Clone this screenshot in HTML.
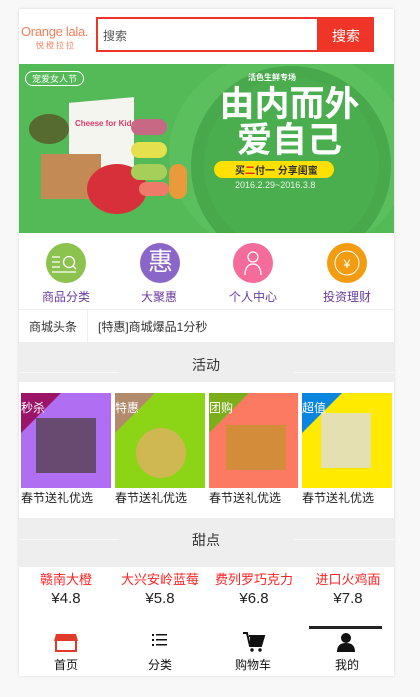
<!DOCTYPE html>
<html><head><meta charset="utf-8"><style>
*{margin:0;padding:0;box-sizing:border-box}
body{width:420px;height:697px;background:#f8f8f8;font-family:"Liberation Sans","Noto Sans CJK SC",sans-serif;position:relative;overflow:hidden}
.c{position:absolute;left:19px;top:9px;width:375px;height:667px;background:#fff;box-shadow:0 0 3px rgba(0,0,0,.12);overflow:hidden}
.a{position:absolute}
.t{position:absolute;white-space:nowrap}
</style></head><body>
<div class="c">
 <div class="t" style="left:2px;top:15px;font-size:13px;color:#f27f5a;letter-spacing:-0.3px">Orange lala.</div>
 <div class="t" style="left:17px;top:31px;font-size:8px;color:#f27f5a;letter-spacing:2px">悦橙拉拉</div>
 <div class="a" style="left:77px;top:8px;width:278px;height:35px;border:2px solid #ef3528;background:#fff"></div>
 <div class="t" style="left:84px;top:18px;font-size:12px;color:#555">搜索</div>
 <div class="a" style="left:298px;top:8px;width:57px;height:35px;background:#ef3528"></div>
 <div class="t" style="left:313px;top:17px;font-size:14px;color:#fff">搜索</div>
 <!-- banner -->
 <div class="a" style="left:0;top:55px;width:375px;height:169px;background:#54b957;overflow:hidden">
  <div class="a" style="left:150px;top:-15px;width:240px;height:210px;border-radius:50%;background:#5bbf5e"></div>
  <div class="a" style="left:172px;top:2px;width:200px;height:200px;border-radius:50%;background:#48a84c"></div>
  <div class="a" style="left:185px;top:14px;width:175px;height:175px;border-radius:50%;background:#4aae4f"></div>
  <div class="t" style="left:229px;top:8px;font-size:8px;color:#fff;font-weight:bold">活色生鲜专场</div>
  <div class="t" style="left:193px;top:23px;font-size:35px;line-height:36px;color:#fff;font-weight:bold;text-align:center;width:155px">由内而外<br>爱自己</div>
  <div class="a" style="left:195px;top:97px;width:120px;height:17px;border-radius:9px;background:#ffe000"></div>
  <div class="t" style="left:216px;top:98px;font-size:10px;font-weight:bold;color:#333">买<span style="color:#e22">二</span>付一 分享闺蜜</div>
  <div class="t" style="left:216px;top:116px;font-size:9px;color:#e8f5e8">2016.2.29~2016.3.8</div>
  <div class="t" style="left:6px;top:7px;font-size:9px;color:#fff;border:1px solid #fff;border-radius:8px;padding:0 6px">宠爱女人节</div>
  <div class="a" style="left:50px;top:36px;width:65px;height:70px;background:#f5f5f0;transform:skewY(-5deg)"></div>
  <div class="t" style="left:56px;top:55px;font-size:8px;color:#e2386a;font-weight:bold">Cheese for Kids</div>
  <div class="a" style="left:10px;top:50px;width:40px;height:30px;border-radius:50%;background:#556b2f"></div>
  <div class="a" style="left:22px;top:90px;width:60px;height:45px;background:#c38a55"></div>
  <div class="a" style="left:68px;top:100px;width:60px;height:50px;border-radius:50%;background:#d8303a"></div>
  <div class="a" style="left:112px;top:55px;width:36px;height:16px;border-radius:8px;background:#c76884"></div>
  <div class="a" style="left:112px;top:78px;width:36px;height:16px;border-radius:8px;background:#e5e04d"></div>
  <div class="a" style="left:112px;top:100px;width:36px;height:16px;border-radius:8px;background:#a6cf5a"></div>
  <div class="a" style="left:120px;top:118px;width:30px;height:14px;border-radius:7px;background:#ef7a6a"></div>
  <div class="a" style="left:150px;top:100px;width:18px;height:35px;border-radius:9px;background:#e99a3a"></div>
 </div>
 <!-- icons -->
 <div class="a" style="left:27px;top:234px;width:40px;height:40px;border-radius:50%;background:#8cc24e"></div>
 <div class="a" style="left:121px;top:234px;width:40px;height:40px;border-radius:50%;background:#8a66c8"></div>
 <div class="t" style="left:129px;top:238px;font-size:25px;line-height:30px;color:#fff">惠</div>
 <div class="a" style="left:214px;top:234px;width:40px;height:40px;border-radius:50%;background:#f56c9a"></div>
 <div class="a" style="left:308px;top:234px;width:40px;height:40px;border-radius:50%;background:#f39c12"></div>
 <svg class="a" style="left:27px;top:234px" width="40" height="40" fill="none" stroke="#fff" stroke-width="1.3"><path d="M6 14h8M6 19h8M6 24h8M6 29h24"/><circle cx="23" cy="19" r="5.5"/><path d="M27 23l3 3"/></svg>
 <svg class="a" style="left:214px;top:234px" width="40" height="40" fill="none" stroke="#fff" stroke-width="1.3"><circle cx="20" cy="14" r="5"/><path d="M12 32c0-8 4-11 8-11s8 3 8 11"/></svg>
 <svg class="a" style="left:308px;top:234px" width="40" height="40" fill="none" stroke="#fff" stroke-width="1"><circle cx="20" cy="20" r="12"/><text x="20" y="25" font-size="12" fill="#fff" stroke="none" text-anchor="middle">¥</text></svg>
 <div class="t" style="left:23px;top:279px;font-size:12px;color:#6a3a9c">商品分类</div>
 <div class="t" style="left:122px;top:279px;font-size:12px;color:#6a3a9c">大聚惠</div>
 <div class="t" style="left:210px;top:279px;font-size:12px;color:#6a3a9c">个人中心</div>
 <div class="t" style="left:304px;top:279px;font-size:12px;color:#6a3a9c">投资理财</div>
 <div class="a" style="left:0;top:300px;width:375px;height:1px;background:#eee"></div>
 <div class="a" style="left:68px;top:301px;width:1px;height:32px;background:#eee"></div>
 <div class="t" style="left:10px;top:309px;font-size:12px;color:#333">商城头条</div>
 <div class="t" style="left:79px;top:309px;font-size:12px;color:#333">[特惠]商城爆品1分秒</div>
 <!-- 活动 -->
 <div class="a" style="left:0;top:333px;width:375px;height:40px;background:#eee"></div>
 <div class="a" style="left:0;top:363px;width:100px;height:1px;background:#f8f8f8"></div>
 <div class="a" style="left:275px;top:363px;width:100px;height:1px;background:#f8f8f8"></div>
 <div class="t" style="left:173px;top:346px;font-size:14px;color:#333">活动</div>
 <div class="a" style="left:2px;top:384px;width:90px;height:95px;background:#b06ff2"></div>
 <div class="a" style="left:96px;top:384px;width:90px;height:95px;background:#8cd516"></div>
 <div class="a" style="left:190px;top:384px;width:89px;height:95px;background:#fc7a62"></div>
 <div class="a" style="left:283px;top:384px;width:90px;height:95px;background:#ffea00"></div>
 <svg class="a" style="left:2px;top:384px" width="375" height="95"><path d="M0 0h40L0 40z" fill="#9b1468"/><path d="M94 0h40L94 40z" fill="#b28a6c"/><path d="M188 0h40L188 40z" fill="#7aaf1a"/><path d="M281 0h40L281 40z" fill="#0a86e0"/>
 <rect x="15" y="25" width="60" height="55" fill="#4a3a3a" opacity=".7"/><circle cx="140" cy="60" r="25" fill="#e0b060" opacity=".8"/><rect x="205" y="32" width="60" height="45" fill="#c2962a" opacity=".7"/><rect x="300" y="20" width="50" height="55" fill="#ddd" opacity=".8"/></svg>
 <div class="t" style="left:2px;top:390px;font-size:12px;color:#fff">秒杀</div>
 <div class="t" style="left:96px;top:390px;font-size:12px;color:#fff">特惠</div>
 <div class="t" style="left:190px;top:390px;font-size:12px;color:#fff">团购</div>
 <div class="t" style="left:283px;top:390px;font-size:12px;color:#fff">超值</div>
 <div class="t" style="left:2px;top:480px;font-size:12px;color:#222">春节送礼优选</div>
 <div class="t" style="left:96px;top:480px;font-size:12px;color:#222">春节送礼优选</div>
 <div class="t" style="left:190px;top:480px;font-size:12px;color:#222">春节送礼优选</div>
 <div class="t" style="left:283px;top:480px;font-size:12px;color:#222">春节送礼优选</div>
 <!-- 甜点 -->
 <div class="a" style="left:0;top:509px;width:375px;height:49px;background:#eee"></div>
 <div class="a" style="left:0;top:530px;width:100px;height:1px;background:#f8f8f8"></div>
 <div class="a" style="left:275px;top:530px;width:100px;height:1px;background:#f8f8f8"></div>
 <div class="t" style="left:173px;top:521px;font-size:14px;color:#333">甜点</div>
 <div class="t" style="left:0;top:560px;width:94px;text-align:center;font-size:13px;color:#f22">赣南大橙</div>
 <div class="t" style="left:94px;top:560px;width:94px;text-align:center;font-size:13px;color:#f22">大兴安岭蓝莓</div>
 <div class="t" style="left:188px;top:560px;width:94px;text-align:center;font-size:13px;color:#f22">费列罗巧克力</div>
 <div class="t" style="left:282px;top:560px;width:94px;text-align:center;font-size:13px;color:#f22">进口火鸡面</div>
 <div class="t" style="left:0;top:581px;width:94px;text-align:center;font-size:15px;color:#222">¥4.8</div>
 <div class="t" style="left:94px;top:581px;width:94px;text-align:center;font-size:15px;color:#222">¥5.8</div>
 <div class="t" style="left:188px;top:581px;width:94px;text-align:center;font-size:15px;color:#222">¥6.8</div>
 <div class="t" style="left:282px;top:581px;width:94px;text-align:center;font-size:15px;color:#222">¥7.8</div>
 <div class="a" style="left:290px;top:617px;width:73px;height:3px;background:#222"></div>
 <!-- tabbar -->
 <svg class="a" style="left:0;top:620px" width="375" height="30">
  <path d="M37 5h20l2 7H35z" fill="#e23a2a"/><path d="M37 12v10h20V12" fill="none" stroke="#e23a2a" stroke-width="2"/>
  <g fill="#111"><rect x="133" y="5" width="2" height="2"/><rect x="137" y="5" width="11" height="1.5"/><rect x="133" y="10" width="2" height="2"/><rect x="137" y="10" width="11" height="1.5"/><rect x="133" y="15" width="2" height="2"/><rect x="137" y="15" width="11" height="1.5"/>
  <path d="M224 4h4l3 13h11l3-10h-15" fill="none" stroke="#111" stroke-width="2"/><path d="M231 7h14l-3 9h-11z"/><circle cx="233" cy="21" r="1.7"/><circle cx="241" cy="21" r="1.7"/>
  <circle cx="327" cy="9" r="5"/><path d="M318 23c0-7 4-9 9-9s9 2 9 9z"/></g>
 </svg>
 <div class="t" style="left:35px;top:647px;font-size:12px;color:#111">首页</div>
 <div class="t" style="left:129px;top:647px;font-size:12px;color:#111">分类</div>
 <div class="t" style="left:216px;top:647px;font-size:12px;color:#111">购物车</div>
 <div class="t" style="left:316px;top:647px;font-size:12px;color:#111">我的</div>
</div>
</body></html>
